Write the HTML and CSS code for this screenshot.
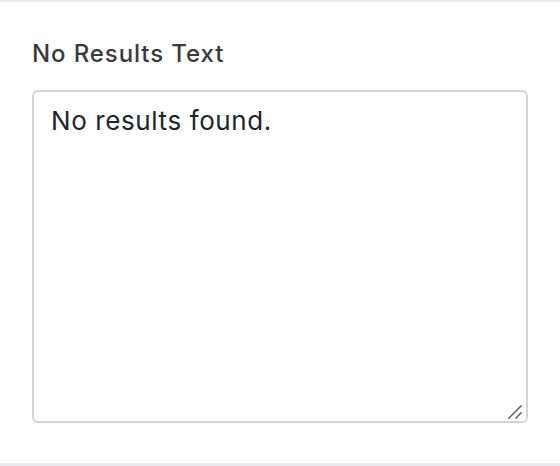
FILE: index.html
```html
<!DOCTYPE html>
<html>
<head>
<meta charset="utf-8">
<link rel="stylesheet" href="styles.css">
</head>
<body>
<div class="panel">
  <label class="label" for="nr">No Results Text</label>
  <div class="field-wrap">
    <textarea id="nr" class="field">No results found.</textarea>
    <svg class="grip" width="14" height="14" viewBox="0 0 14 14" aria-hidden="true">
      <path d="M0.8 13.2 L13.2 0.8 M7.8 13.2 L13.2 7.8" stroke="#5a5a5c" stroke-width="1.4" stroke-linecap="round" fill="none"/>
    </svg>
  </div>
</div>
</body>
</html>
```
FILE: styles.css
```css
html, body {
  margin: 0;
  padding: 0;
  background: #fff;
}
.panel {
  box-sizing: border-box;
  height: 466px;
  border-top: 2px solid #e9e9ee;
  border-bottom: 3px solid #e9e9ee;
  padding: 37px 32px 0 32px;
  display: flex;
  flex-direction: column;
  font-family: Inter, "Noto Sans", sans-serif;
}
.label {
  font-size: 24px;
  font-weight: 500;
  color: #3a3a3c;
  line-height: 30px;
  letter-spacing: 0.9px;
}
.field-wrap {
  position: relative;
  margin-top: 21px;
  width: 496px;
  height: 333px;
}
.field {
  display: block;
  box-sizing: border-box;
  width: 100%;
  height: 100%;
  margin: 0;
  border: 2px solid #d4d4d6;
  border-radius: 6px;
  padding: 11.5px 17px;
  font-family: Inter, "Noto Sans", sans-serif;
  font-size: 26px;
  line-height: 34px;
  letter-spacing: 0.6px;
  color: #212529;
  resize: none;
  outline: none;
}
.grip {
  position: absolute;
  right: 6px;
  bottom: 4px;
  pointer-events: none;
}
```
